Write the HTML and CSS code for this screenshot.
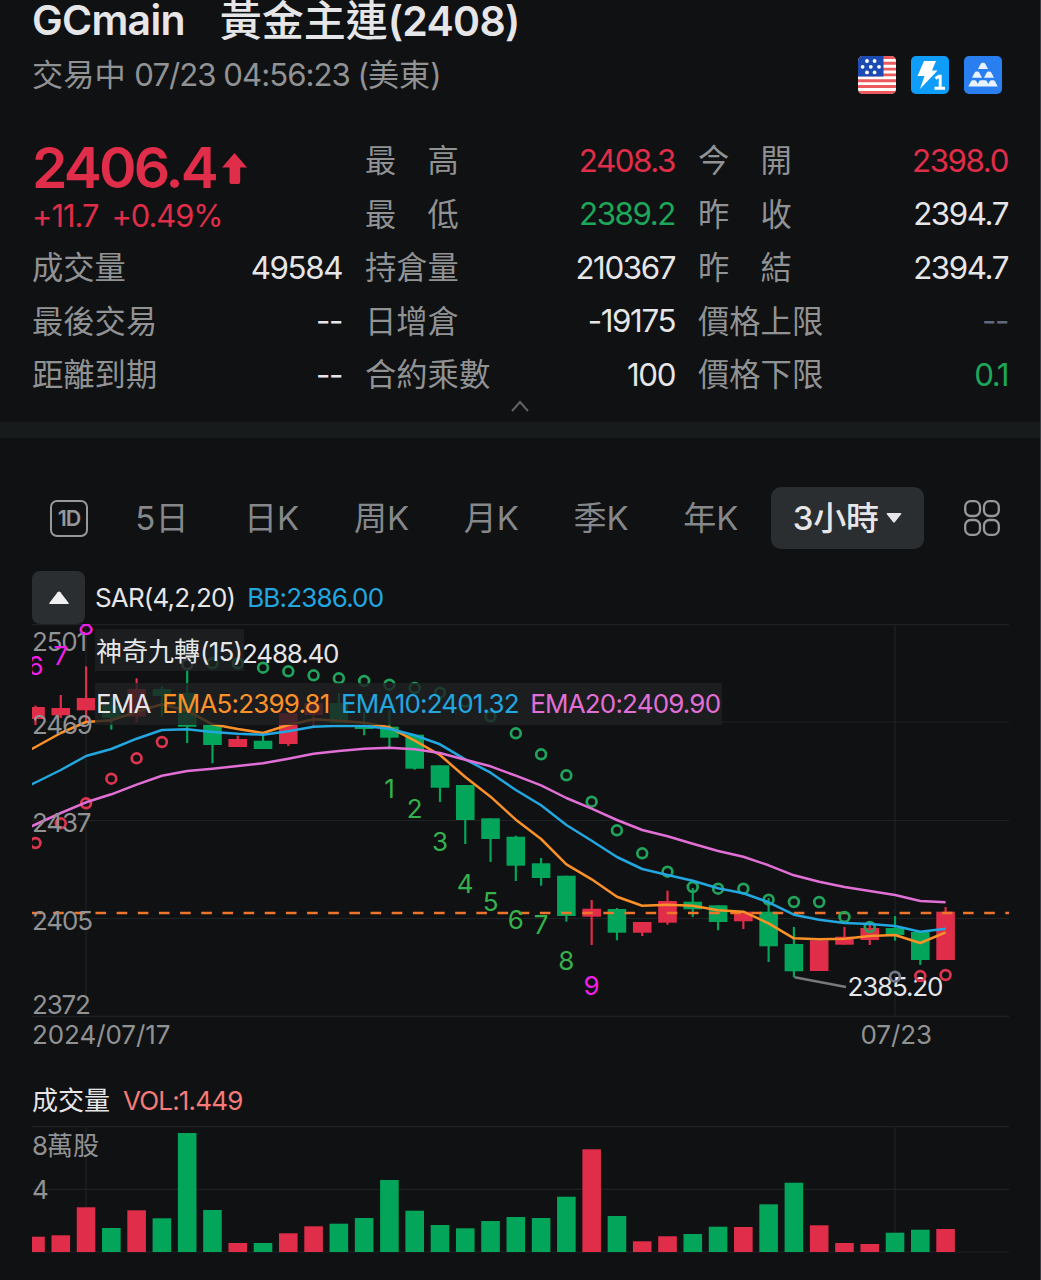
FILE: index.html
```html
<!DOCTYPE html>
<html lang="zh-Hant">
<head>
    <title>GCmain</title>
    <meta charset="UTF-8">
    <meta name="viewport" content="width=device-width, initial-scale=1.0">
    <link rel="stylesheet" href="styles.css">
</head>
<body>
    <header class="header">
        <h1 class="title"><span>GCmain</span><span><span class="cjk">黃金主連</span>(2408)</span></h1>
        <div class="subline">
            <div class="status"><span class="cjk">交易中 </span>07/23 04:56:23 (<span class="cjk">美東</span>)</div>
            <div class="badges">
                <svg class="badge" viewBox="0 0 38 38">
                    <clipPath id="round"><rect width="38" height="38" rx="5"/></clipPath>
                    <g clip-path="url(#round)">
                        <rect width="38" height="38" fill="#fff"/>
                        <path d="M0 1.5h38M0 7.3h38M0 13.1h38M0 18.9h38M0 24.7h38M0 30.5h38M0 36.5h38" stroke="#ec5a5d" stroke-width="2.9"/>
                        <rect width="25.5" height="20.5" fill="#1d4bb4"/>
                        <g fill="#fff">
                            <circle cx="9" cy="5" r="1.9"/><circle cx="16.6" cy="5" r="1.9"/>
                            <circle cx="4.6" cy="10.8" r="1.9"/><circle cx="12.8" cy="10.8" r="1.9"/><circle cx="21" cy="10.8" r="1.9"/>
                            <circle cx="9" cy="16.4" r="1.9"/><circle cx="16.6" cy="16.4" r="1.9"/>
                        </g>
                    </g>
                </svg>
                <svg class="badge" viewBox="0 0 38 38">
                    <rect width="38" height="38" rx="5" fill="#0f9dfb"/>
                    <path d="M13 5h12l-4 9.5h5.5L9 33l4.500-13H6.500z" fill="#fff"/>
                    <path d="M24.500 22.500l3.500-2.300h1.200v12.300M23.500 32.300h10.500" fill="none" stroke="#fff" stroke-width="2.900"/>
                </svg>
                <svg class="badge" viewBox="0 0 38 38">
                    <rect width="38" height="38" rx="5" fill="#2a7ff0"/>
                    <g fill="#e8f2ff">
                        <path d="M14 13l2.600-5q.6-1.200 2-1.200h.8q1.400 0 2 1.200l2.600 5z"/>
                        <path d="M8 21.800l2.600-5q.6-1.200 2-1.200h.8q1.400 0 2 1.200l2.600 5zM20 21.800l2.600-5q.6-1.200 2-1.200h.8q1.400 0 2 1.200l2.600 5z"/>
                        <path d="M4.300 30.500l2.600-5q.6-1.200 2-1.200h1.600q1.400 0 2 1.200l1.300 2.400 1.200-2.400q.6-1.200 2-1.200h4q1.400 0 2 1.200l1.200 2.400 1.300-2.400q.6-1.200 2-1.200h1.600q1.400 0 2 1.200l2.600 5z"/>
                    </g>
                </svg>
            </div>
        </div>
    </header>

    <section class="quote">
        <div class="price-box">
            <div class="price">2406.4<svg class="price-arrow" viewBox="0 0 25 31"><path d="M12.500 0L25 14.500h-6.800V29q0 2-2 2H9.500q-2 0-2-2V14.500H0z"/></svg></div>
            <div class="change"><span>+11.7</span><span>+0.49%</span></div>
        </div>
        <div class="stat"><span class="label">最　高</span><span class="value up">2408.3</span></div>
        <div class="stat"><span class="label">今　開</span><span class="value up">2398.0</span></div>
        <div class="stat"><span class="label">最　低</span><span class="value down">2389.2</span></div>
        <div class="stat"><span class="label">昨　收</span><span class="value">2394.7</span></div>
        <div class="stat"><span class="label">成交量</span><span class="value">49584</span></div>
        <div class="stat"><span class="label">持倉量</span><span class="value">210367</span></div>
        <div class="stat"><span class="label">昨　結</span><span class="value">2394.7</span></div>
        <div class="stat"><span class="label">最後交易</span><span class="value">--</span></div>
        <div class="stat"><span class="label">日增倉</span><span class="value">-19175</span></div>
        <div class="stat"><span class="label">價格上限</span><span class="value none">--</span></div>
        <div class="stat"><span class="label">距離到期</span><span class="value">--</span></div>
        <div class="stat"><span class="label">合約乘數</span><span class="value">100</span></div>
        <div class="stat"><span class="label">價格下限</span><span class="value down">0.1</span></div>
    </section>
    <div class="fold">
        <svg viewBox="0 0 18 12"><path d="M1 11l8-9 8 9"/></svg>
    </div>
    <div class="divider"></div>

    <nav class="tabs">
        <div class="tab-day"><span class="day-icon">1D</span></div>
        <span class="tab">5日</span>
        <span class="tab">日K</span>
        <span class="tab">周K</span>
        <span class="tab">月K</span>
        <span class="tab">季K</span>
        <span class="tab">年K</span>
        <div class="tab-active"><span>3小時</span><svg viewBox="0 0 16 10"><path d="M1.500 0h13q1.500 0 .6 1.200L8.800 9.300q-.8.900-1.600 0L.9 1.200Q0 0 1.500 0z"/></svg></div>
        <svg class="tab-grid" viewBox="0 0 36 36">
            <rect x="1.200" y="1.200" width="14.800" height="14.800" rx="5.500"/>
            <rect x="20" y="1.200" width="14.800" height="14.800" rx="5.500"/>
            <rect x="1.200" y="20" width="14.800" height="14.800" rx="5.500"/>
            <rect x="20" y="20" width="14.800" height="14.800" rx="5.500"/>
        </svg>
    </nav>

    <section class="chart">
        <div class="indicator">
            <span class="collapse"><svg viewBox="0 0 20 13"><path d="M1.500 13q-2 0-.8-1.600L8.600 1.200q1.400-1.600 2.800 0l7.900 10.200q1.200 1.600-.8 1.600z"/></svg></span>
            <span>SAR(4,2,20)</span>
            <span class="blue">BB:2386.00</span>
        </div>
        <div class="plot">
            <svg id="kline" viewBox="32 624 977 393"></svg>
            <div class="legend legend-nine"><span class="cjk">神奇九轉</span>(15)</div>
            <div class="legend-high">2488.40</div>
            <div class="legend legend-ema">
                <span>EMA</span>
                <span class="orange">EMA5:2399.81</span>
                <span class="blue">EMA10:2401.32</span>
                <span class="pink">EMA20:2409.90</span>
            </div>
        </div>
        <div class="dates"><span>2024/07/17</span><span>07/23</span></div>
    </section>

    <section class="volume">
        <div class="volume-head"><span class="cjk">成交量</span><span class="vol">VOL:1.449</span></div>
        <svg id="volume" viewBox="32 1126 977 127"></svg>
    </section>

    <script src="script.js"></script>
</body>
</html>
```
FILE: styles.css
```css
:root{
    --bg: #0f1112;
    --panel: #2b2e31;
    --text: #e6e6e8;
    --gray: #919294;
    --red: #e02d49;
    --green: #03a55a;
    --green-text: #1ea65a;
    --orange: #fb9128;
    --blue: #22a7e0;
    --pink: #e26fd6;
}

*{
    box-sizing: border-box;
}

body{
    margin: 0;
    width: 1041px;
    height: 1280px;
    overflow: hidden;
    background-color: var(--bg);
    border-right: 1px solid #3a4043;
    color: var(--text);
    font-family: Inter, "Noto Sans CJK TC", sans-serif;
    font-size: 26px;
}

svg{
    display: block;
}

/* latin text runs tight, chinese keeps its own pitch */
.status, .change, .indicator, .legend, .volume-head{
    letter-spacing: -0.032em;
}

.value, .legend-high, .axis, .low{
    letter-spacing: -0.045em;
}

.title .cjk, .status .cjk, .legend .cjk, .volume-head .cjk, .axis .cjk{
    letter-spacing: 0;
}

.header{
    height: 134px;
    padding: 0 38px 0 32px;
}

.title{
    display: flex;
    gap: 35px;
    height: 42px;
    margin: 0;
    font-size: 41px;
    font-weight: 600;
    letter-spacing: -0.018em;
    line-height: 41px;
    white-space: nowrap;
}

.title .cjk{
    font-size: 42px;
    font-weight: 500;
}

.subline{
    display: flex;
    justify-content: space-between;
    align-items: center;
    height: 66px;
}

.status{
    padding-bottom: 5px;
    color: var(--gray);
    font-size: 31.2px;
}

.badges{
    display: flex;
    gap: 15px;
}

.badge{
    width: 38px;
    height: 38px;
}

/* quote table */
.quote{
    display: grid;
    grid-template-columns: repeat(3, 311px);
    grid-auto-rows: 53.5px;
    column-gap: 22px;
    padding-left: 32px;
}

.price-box{
    grid-row: span 2;
    color: var(--red);
}

.price{
    display: flex;
    align-items: center;
    gap: 6px;
    height: 66px;
    font-size: 57px;
    font-weight: 600;
    letter-spacing: -0.05em;
}

.price-arrow{
    width: 25px;
    height: 31px;
    margin-top: 2px;
    fill: var(--red);
}

.change{
    display: flex;
    gap: 13px;
    font-size: 30.8px;
    line-height: 32px;
}

.stat{
    display: flex;
    justify-content: space-between;
    align-items: center;
}

.label{
    padding-bottom: 4px;
    color: var(--gray);
    font-size: 31.3px;
}

.value{
    margin-right: 1px;
    font-size: 31.3px;
}

.up{
    color: var(--red);
}

.down{
    color: var(--green-text);
}

.none{
    color: #5f6b7c;
}

.fold{
    display: flex;
    justify-content: center;
    height: 20.5px;
}

.fold svg{
    width: 18px;
    height: 12px;
    margin-top: -2px;
    fill: none;
    stroke: #626365;
    stroke-width: 2;
}

.divider{
    height: 16px;
    background-color: #171b1c;
}

/* period tabs */
.tabs{
    display: flex;
    align-items: center;
    height: 62px;
    margin-top: 49px;
    padding-left: 32px;
    color: #85878a;
    font-size: 33px;
}

.tab-day{
    width: 75px;
    padding-left: 18px;
}

.day-icon{
    display: block;
    width: 38px;
    height: 37px;
    border: 2.5px solid #97989a;
    border-radius: 7px;
    color: #97989a;
    font-size: 21.5px;
    font-weight: 600;
    letter-spacing: -1px;
    line-height: 32px;
    text-align: center;
}

.tab{
    width: 109.8px;
    padding-bottom: 5px;
    text-align: center;
}

.tab-active{
    display: flex;
    align-items: center;
    gap: 7px;
    width: 153px;
    height: 62px;
    margin-left: 5px;
    padding-left: 22px;
    border-radius: 10px;
    background-color: var(--panel);
    color: var(--text);
    font-size: 33px;
    font-weight: 500;
}

.tab-active span{
    padding-bottom: 5px;
    letter-spacing: -0.2px;
}

.tab-active svg{
    width: 16px;
    height: 10px;
    fill: var(--text);
}

.tab-grid{
    width: 36px;
    height: 36px;
    margin-left: 40px;
    fill: none;
    stroke: #97989a;
    stroke-width: 2.3;
}

/* candles */
.chart{
    padding: 22px 0 0 32px;
}

.indicator{
    display: flex;
    align-items: center;
    height: 53px;
}

.collapse{
    display: flex;
    align-items: center;
    justify-content: center;
    width: 53px;
    height: 53px;
    margin-right: 10px;
    border-radius: 8px;
    background-color: var(--panel);
}

.collapse svg{
    width: 20px;
    height: 13px;
    fill: #f0f0f0;
}

.indicator .blue{
    margin-left: 12px;
}

.plot{
    position: relative;
    width: 977px;
    height: 393px;
}

.plot svg{
    width: 977px;
    height: 393px;
}

.legend{
    position: absolute;
    left: 63px;
    height: 42px;
    padding-left: 1px;
    background-color: rgba(30, 32, 34, 0.8);
    line-height: 42px;
    white-space: nowrap;
}

.legend-nine{
    top: 5px;
    width: 149px;
    line-height: 45px;
}

.legend-high{
    position: absolute;
    top: 10px;
    left: 210px;
    line-height: 40px;
}

.legend-ema{
    top: 59px;
    display: flex;
    gap: 11.5px;
    width: 627px;
}

.blue{
    color: var(--blue);
}

.orange{
    color: var(--orange);
}

.pink{
    color: var(--pink);
}

.dates{
    display: flex;
    justify-content: space-between;
    width: 900px;
    height: 34px;
    color: var(--gray);
    letter-spacing: -0.003em;
    line-height: 35px;
}

/* volume */
.volume{
    padding: 30px 0 0 32px;
}

.volume-head{
    display: flex;
    align-items: center;
    gap: 13px;
    height: 45px;
    padding-bottom: 5px;
    line-height: 40px;
}

.vol{
    color: #f67b78;
}

.volume svg{
    width: 977px;
    height: 127px;
}

/* svg parts */
.grid{
    stroke: #1f2224;
    stroke-width: 1.2;
}

.axis{
    fill: var(--gray);
}

.rise{
    fill: var(--red);
    stroke: var(--red);
}

.fall{
    fill: var(--green);
    stroke: var(--green);
}

.candle{
    stroke: none;
}

.wick{
    stroke-width: 2.2;
}

.line{
    fill: none;
    stroke-width: 2.5;
    stroke-linejoin: round;
}

.ema5{
    stroke: var(--orange);
}

.ema10{
    stroke: var(--blue);
}

.ema20{
    stroke: var(--pink);
}

.last{
    stroke: #f0752b;
    stroke-width: 2.6;
    stroke-dasharray: 10.600 10.560;
}

.sar{
    fill: none;
    stroke-width: 2.7;
}

.sar-up{
    stroke: #dd3550;
}

.sar-down{
    stroke: #22a35c;
}

.sar-flat{
    stroke: #72798a;
}

.nine{
    fill: #36b24c;
    text-anchor: middle;
}

.nine-hot{
    fill: #f020e8;
}

.callout{
    stroke: #77797b;
    stroke-width: 2.4;
}

.low{
    fill: var(--text);
}
```
FILE: script.js
```js
var STEP = 25.28
var FIRST = 35.5
var WIDTH = 18.6

function cx(i){
    return FIRST + i * STEP
}

// type, high, body top, body bottom, low
var candles = [
    ["r", 705.7, 707, 719, 725], ["r", 695, 708, 715.3, 718], ["r", 666.3, 698, 710.3, 722],
    ["g", 697, 705, 718, 729.7], ["r", 678.3, 689, 716.7, 722.7], ["g", 686.3, 689, 696, 716.7],
    ["g", 670, 693, 726.7, 743], ["g", 724.7, 724.7, 745, 763.3], ["r", 735.7, 739, 747, 747],
    ["g", 735, 740.7, 749, 749], ["r", 713.3, 713.3, 744, 746], ["r", 700, 703, 715, 725.7],
    ["g", 693, 703, 723, 723], ["g", 711.7, 725, 729, 735.3], ["g", 710, 726.7, 737.7, 747],
    ["g", 734.7, 734.7, 768.7, 769.7], ["g", 765.3, 765.3, 787.7, 802], ["g", 785, 785, 820, 844],
    ["g", 818.3, 818.3, 839, 862], ["g", 835.7, 836.7, 865.7, 881], ["g", 858, 863.3, 878, 885.7],
    ["g", 875.7, 875.7, 916, 921.7], ["r", 900, 908.7, 916.7, 945], ["g", 908, 909, 932.7, 940.3],
    ["r", 922, 922, 932.7, 936], ["r", 890.7, 901, 922.7, 924.7], ["g", 888, 901.7, 909.3, 917],
    ["g", 905.3, 905.3, 922, 930.3], ["r", 911.7, 911.7, 921.3, 929], ["g", 898, 911.7, 946.3, 962],
    ["g", 927, 944, 971.3, 977.3], ["r", 940.3, 940.3, 971, 971], ["r", 927, 936.7, 944.7, 944.7],
    ["r", 924, 928, 940, 945], ["g", 916, 928, 935, 940.7], ["g", 931.7, 932, 960, 965],
    ["r", 907, 911.7, 960, 960]
]

var ema5 = [747, 733, 722, 720.3, 711.7, 704.3, 710.7, 724.3, 729, 733, 725, 719.3, 720.7, 722.7, 727.3, 740.7, 755, 777, 796.7, 819.7, 839, 864.3, 879.3, 896.7, 905.7, 904.7, 905.7, 910.3, 911.7, 923.3, 938.3, 939.3, 938.7, 936, 935, 943, 932.3]
var ema10 = [782.500, 770, 756, 749, 738.7, 730, 729.3, 732, 733.7, 734.7, 731.3, 726.7, 725.7, 726, 728.7, 735.3, 744.3, 759.3, 772.7, 790, 805.3, 825, 840.7, 857, 869, 875, 880.7, 888.3, 893.3, 902.3, 914.7, 919.7, 923, 924, 926, 931.7, 928.7]
var ema20 = [824.500, 813, 802.3, 794.3, 784.7, 775.7, 771, 768.7, 766, 763.3, 758.7, 753.7, 751, 748.7, 747.7, 749.3, 753, 759.7, 766.3, 775.7, 785.3, 798, 808.7, 820, 830, 836.3, 843.7, 851, 856.7, 865.3, 875.3, 881.7, 887, 891, 895, 901, 902.3]
var sar = [843, 823.3, 803.3, 778.7, 758.3, 742, 664.3, 663.3, 663.3, 667.7, 671.3, 675.3, 678.3, 681, 684.7, 688, 692.7, 701.7, 716.3, 733.3, 754.3, 775.3, 801.7, 830.3, 853.3, 871.7, 887, 888.7, 888.7, 899.7, 902, 902, 917, 927, 976.7, 976, 975]
var volumes = [1236.7, 1235.3, 1207.3, 1228, 1210.3, 1218.3, 1133, 1210, 1243, 1243, 1233.3, 1226.3, 1223.7, 1218, 1180, 1210.7, 1225, 1228.3, 1221, 1217, 1218, 1196.7, 1149.3, 1216, 1241.3, 1236.3, 1234, 1226.7, 1227, 1204.3, 1182.7, 1225.3, 1243, 1244, 1232.7, 1229.7, 1229]
var volumeTypes = "rrrgrgggrgrrgggggggggg" + "rgrrggrggrrrggr"

// candle index, number, baseline
var nines = [
    [0, 6, 675], [1, 7, 665], [2, 8, 635],
    [14, 1, 798], [15, 2, 818], [16, 3, 850.7], [17, 4, 893], [18, 5, 910.7],
    [19, 6, 929], [20, 7, 934], [21, 8, 969.7], [22, 9, 994.7]
]

function hline(y){
    return '<path class="grid" d="M32 ' + y + 'H1009"/>'
}

function vline(x, y1, y2){
    return '<path class="grid" d="M' + x + ' ' + y1 + 'V' + y2 + '"/>'
}

function text(cls, x, y, str){
    return '<text class="' + cls + '" x="' + x + '" y="' + y + '">' + str + '</text>'
}

function rect(type, i, top, bottom){
    return '<rect class="candle ' + (type == "r" ? "rise" : "fall") + '" x="' + (cx(i) - WIDTH / 2) + '" y="' + top + '" width="' + WIDTH + '" height="' + (bottom - top) + '"/>'
}

function line(cls, values){
    var points = values.map(function(y, i){
        return cx(i) + "," + y
    })
    // extend to the left edge of the plot
    points.unshift("10.2," + (values[0] * 2 - values[1]))
    return '<polyline class="line ' + cls + '" points="' + points.join(" ") + '"/>'
}

function drawKline(){
    var out = hline(624.6) + hline(722) + hline(820.5) + hline(918.5) + hline(1016.4)
    out += vline(86, 624, 1017) + vline(895, 624, 1017)

    candles.forEach(function(c, i){
        out += '<path class="wick ' + (c[0] == "r" ? "rise" : "fall") + '" d="M' + cx(i) + ' ' + c[1] + 'V' + c[4] + '"/>'
        out += rect(c[0], i, c[2], c[3])
    })

    out += '<path class="last" d="M32 913H1009"/>'
    out += '<path class="callout" d="M794.500 977.300L846 987"/>'
    out += text("low", 847.5, 995.5, "2385.20")
    sar.forEach(function(y, i){
        var cls = "sar-down"
        if (i < 6 || i > 34){
            cls = "sar-up"
        }else if (i == 6 || i == 34){
            cls = "sar-flat"
        }
        out += '<circle class="sar ' + cls + '" cx="' + cx(i) + '" cy="' + y + '" r="4.900"/>'
    })
    out += line("ema5", ema5) + line("ema10", ema10) + line("ema20", ema20)

    out += text("axis", 32, 650.5, "2501") + text("axis", 32, 734.3, "2469")
    out += text("axis", 32, 832.3, "2437") + text("axis", 32, 930.3, "2405")
    out += text("axis", 32, 1014, "2372")
    nines.forEach(function(n){
        var hot = n[0] < 3 || n[1] == 9
        out += text(hot ? "nine nine-hot" : "nine", cx(n[0]), n[2], n[1])
    })
    document.getElementById("kline").innerHTML = out
}

function drawVolume(){
    var out = hline(1126.6) + hline(1189.3) + hline(1252)
    out += vline(86, 1126, 1252) + vline(895, 1126, 1252)
    volumes.forEach(function(y, i){
        out += rect(volumeTypes[i], i, y, 1252)
    })
    out += text("axis", 32, 1154.5, '8<tspan class="cjk">萬股</tspan>') + text("axis", 32, 1199.3, "4")
    document.getElementById("volume").innerHTML = out
}

drawKline()
drawVolume()
```
